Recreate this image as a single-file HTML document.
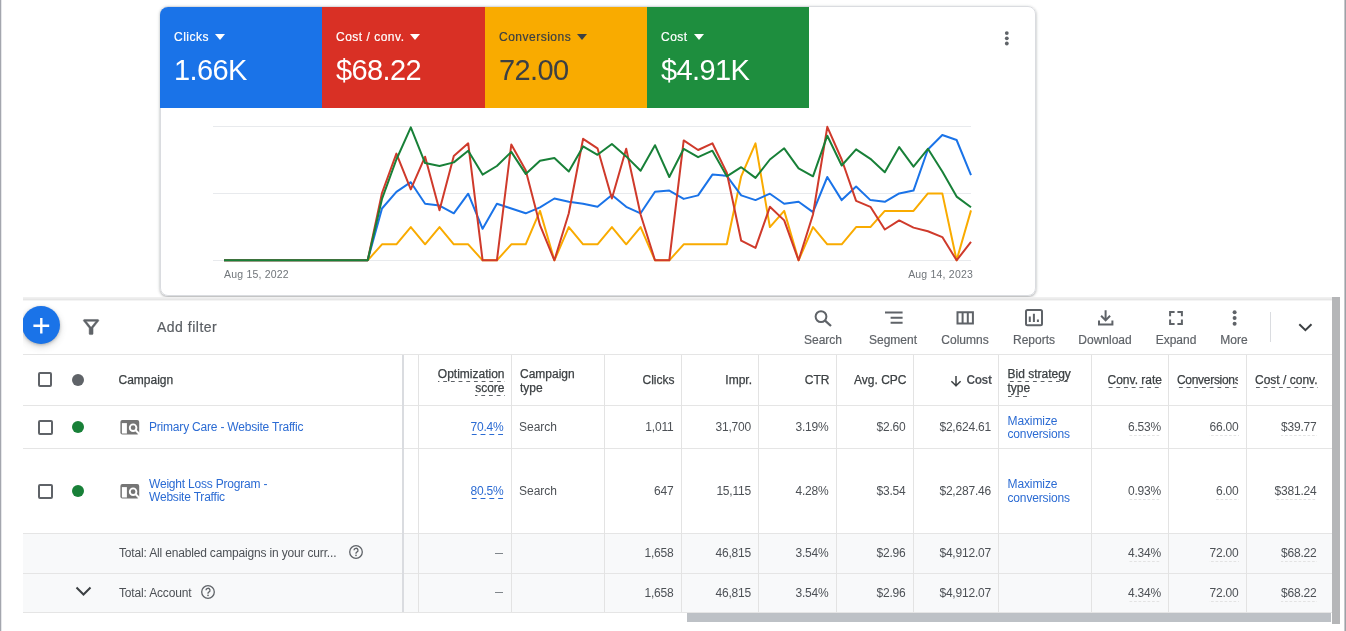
<!DOCTYPE html>
<html><head><meta charset="utf-8">
<style>
*{box-sizing:border-box;margin:0;padding:0}
html,body{width:1346px;height:631px;overflow:hidden;background:#fff;font-family:"Liberation Sans",sans-serif;color:#3c4043}
body{position:relative}
.abs{position:absolute}
.tile{position:absolute;top:7px;height:101px;width:163px;color:#fff}
.tile .lab{position:absolute;left:14px;top:23px;font-size:12px;letter-spacing:.5px;white-space:nowrap;-webkit-text-stroke:.2px currentColor}
.tile .lab i{display:inline-block;width:0;height:0;border-left:5px solid transparent;border-right:5px solid transparent;border-top:6px solid currentColor;margin-left:6px;vertical-align:1.5px}
.tile .val{position:absolute;left:14px;top:47px;font-size:29px;letter-spacing:-.6px;white-space:nowrap}
.tb{position:absolute;top:0;height:56px;text-align:center;font-size:12px;color:#5f6368}
.tb svg{position:absolute;top:9px;left:50%;margin-left:-12px}
.tb span{position:absolute;top:34px;left:0;right:0;white-space:nowrap;-webkit-text-stroke:.2px currentColor}
.vl{position:absolute;width:1px;background:#e3e3e3}
.hl{position:absolute;height:1px;background:#e5e5e5;left:23px;width:1309px}
.t{position:absolute;white-space:nowrap}
.hd{-webkit-text-stroke:.25px currentColor;color:#3c4043 !important}
.num{letter-spacing:-.2px}
.cb{position:absolute;width:14.5px;height:14.5px;border:2px solid #5f6368;border-radius:2px}
.dot{position:absolute;width:12px;height:12px;border-radius:50%}
.dash{padding-bottom:2px;background-image:linear-gradient(to right,#5f6368 55%,transparent 55%);background-size:7.7px 1.3px;background-repeat:repeat-x;background-position:right bottom}
.dashb{padding-bottom:1.5px;background-image:linear-gradient(to right,transparent 49%,#2b6bd3 49%);background-size:8.8px 1.3px;background-repeat:repeat-x;background-position:right bottom}
.dot2{padding-bottom:2px;background-image:linear-gradient(to right,#e3e3e3 55%,transparent 55%);background-size:4.5px 1px;background-repeat:repeat-x;background-position:right bottom}
</style></head><body>
<div id="wrap" style="position:absolute;left:0;top:0;width:1346px;height:631px;will-change:transform">
<div class="abs" style="left:0;top:0;width:1px;height:631px;background:#a4a6ae"></div><div class="abs" style="left:1px;top:0;width:1px;height:631px;background:#e6e7ea"></div>
<div class="abs" style="left:1344px;top:0;width:1px;height:631px;background:#c6c8cc"></div><div class="abs" style="left:1345px;top:0;width:1px;height:631px;background:#9ea1a6"></div>

<!-- chart card -->
<div class="abs" style="left:159.5px;top:6px;width:876.5px;height:290px;border:1px solid #dadce0;border-radius:8px;box-shadow:0 1px 2px rgba(60,64,67,.3),0 1px 3px 1px rgba(60,64,67,.12)"></div>
<div class="tile" style="left:160px;background:#1a73e8;border-top-left-radius:8px"><div class="lab">Clicks<i></i></div><div class="val">1.66K</div></div>
<div class="tile" style="left:322px;background:#d93025"><div class="lab">Cost / conv.<i></i></div><div class="val">$68.22</div></div>
<div class="tile" style="left:485px;background:#f9ab00;color:#3c4043"><div class="lab">Conversions<i></i></div><div class="val">72.00</div></div>
<div class="tile" style="left:647px;width:162px;background:#1e8e3e"><div class="lab">Cost<i></i></div><div class="val">$4.91K</div></div>
<svg class="abs" style="left:1000px;top:28px" width="14" height="20" viewBox="0 0 14 20"><circle cx="6.8" cy="5.1" r="1.9" fill="#5f6368"/><circle cx="6.8" cy="10.3" r="1.9" fill="#5f6368"/><circle cx="6.8" cy="15.5" r="1.9" fill="#5f6368"/></svg>

<svg class="abs" style="left:0;top:0" width="1346" height="300">
<g stroke="#e8eaed" stroke-width="1"><line x1="213" y1="126.5" x2="971" y2="126.5"/><line x1="213" y1="193.5" x2="971" y2="193.5"/><line x1="213" y1="260.5" x2="971" y2="260.5"/></g>
<g fill="none" stroke-width="2" stroke-linejoin="round">
<path stroke="#f9ab00" d="M224.0,260.3 L238.4,260.3 L252.7,260.3 L267.1,260.3 L281.5,260.3 L295.8,260.3 L310.2,260.3 L324.6,260.3 L338.9,260.3 L353.3,260.3 L367.7,260.3 L382.0,244.3 L396.4,244.3 L410.8,227.1 L425.1,244.3 L439.5,227.1 L453.8,244.3 L468.2,244.3 L482.6,260.3 L496.9,260.3 L511.3,244.3 L525.7,244.3 L540.0,210.9 L554.4,260.3 L568.8,227.1 L583.1,244.3 L597.5,244.3 L611.9,227.1 L626.2,244.3 L640.6,227.1 L655.0,260.3 L669.3,260.3 L683.7,244.3 L698.1,244.3 L712.4,244.3 L726.8,244.3 L741.2,176.3 L755.5,143.3 L769.9,227.1 L784.2,210.9 L798.6,260.3 L813.0,227.1 L827.3,244.3 L841.7,244.3 L856.1,227.1 L870.4,227.1 L884.8,210.9 L899.2,210.9 L913.5,210.9 L927.9,193.4 L942.3,193.4 L956.6,260.3 L971.0,210.4"/>
<path stroke="#1a73e8" d="M224.0,260.3 L238.4,260.3 L252.7,260.3 L267.1,260.3 L281.5,260.3 L295.8,260.3 L310.2,260.3 L324.6,260.3 L338.9,260.3 L353.3,260.3 L367.7,260.3 L382.0,208.5 L396.4,191.8 L410.8,182.2 L425.1,203.7 L439.5,205.6 L453.8,213.3 L468.2,193.7 L482.6,228.8 L496.9,203.7 L511.3,208.5 L525.7,213.3 L540.0,207.3 L554.4,198.5 L568.8,201.8 L583.1,203.7 L597.5,206.8 L611.9,194.9 L626.2,206.8 L640.6,213.3 L655.0,191.8 L669.3,190.6 L683.7,198.9 L698.1,195.4 L712.4,174.6 L726.8,175.8 L741.2,195.4 L755.5,200.1 L769.9,193.7 L784.2,203.7 L798.6,201.8 L813.0,212.1 L827.3,177.0 L841.7,200.1 L856.1,186.5 L870.4,200.1 L884.8,201.8 L899.2,193.4 L913.5,190.6 L927.9,149.5 L942.3,135.0 L956.6,140.0 L971.0,175.1"/>
<path stroke="#cf3a2b" d="M224.0,260.3 L238.4,260.3 L252.7,260.3 L267.1,260.3 L281.5,260.3 L295.8,260.3 L310.2,260.3 L324.6,260.3 L338.9,260.3 L353.3,260.3 L367.7,260.3 L382.0,193.0 L396.4,153.6 L410.8,189.4 L425.1,156.7 L439.5,210.2 L453.8,156.0 L468.2,143.3 L482.6,260.3 L496.9,260.3 L511.3,144.5 L525.7,170.3 L540.0,225.2 L554.4,260.3 L568.8,213.3 L583.1,138.8 L597.5,148.3 L611.9,198.5 L626.2,148.8 L640.6,214.5 L655.0,260.3 L669.3,260.3 L683.7,140.4 L698.1,150.0 L712.4,143.3 L726.8,172.7 L741.2,240.7 L755.5,247.9 L769.9,206.8 L784.2,220.4 L798.6,260.3 L813.0,214.5 L827.3,126.8 L841.7,159.5 L856.1,200.9 L870.4,206.8 L884.8,229.5 L899.2,220.4 L913.5,227.6 L927.9,231.2 L942.3,237.1 L956.6,260.3 L971.0,241.9"/>
<path stroke="#188038" d="M224.0,260.3 L238.4,260.3 L252.7,260.3 L267.1,260.3 L281.5,260.3 L295.8,260.3 L310.2,260.3 L324.6,260.3 L338.9,260.3 L353.3,260.3 L367.7,260.3 L382.0,198.9 L396.4,159.5 L410.8,127.3 L425.1,163.1 L439.5,166.0 L453.8,162.4 L468.2,150.7 L482.6,174.6 L496.9,166.0 L511.3,151.9 L525.7,173.9 L540.0,160.7 L554.4,157.9 L568.8,171.5 L583.1,146.4 L597.5,154.8 L611.9,144.0 L626.2,156.4 L640.6,170.8 L655.0,145.2 L669.3,177.0 L683.7,148.8 L698.1,157.2 L712.4,150.7 L726.8,176.3 L741.2,167.2 L755.5,177.9 L769.9,159.5 L784.2,148.3 L798.6,168.4 L813.0,176.3 L827.3,135.7 L841.7,165.5 L856.1,149.3 L870.4,158.8 L884.8,172.2 L899.2,147.1 L913.5,166.7 L927.9,148.8 L942.3,171.5 L956.6,196.6 L971.0,207.3"/>
</g>
<text x="224" y="277.5" font-size="10.5" letter-spacing=".2" fill="#70757a" font-family="Liberation Sans">Aug 15, 2022</text>
<text x="973" y="277.5" font-size="10.5" letter-spacing=".2" fill="#70757a" font-family="Liberation Sans" text-anchor="end">Aug 14, 2023</text>
</svg>

<!-- toolbar -->
<div class="abs" style="left:23px;top:297px;width:1309px;height:1px;background:#f0f0f0"></div><div class="abs" style="left:23px;top:298px;width:1309px;height:1px;background:#ececec"></div><div class="abs" style="left:23px;top:299px;width:1309px;height:1px;background:#e6e6e6"></div><div class="abs" style="left:23px;top:300px;width:1309px;height:1px;background:#f4f4f4"></div>
<div class="abs" style="left:23px;top:299px;width:1309px;height:56px;overflow:hidden">
  <div class="abs" style="left:-1.3px;top:7.2px;width:38.3px;height:38.3px;border-radius:50%;background:#1a73e8;box-shadow:0 1px 3px rgba(60,64,67,.3),0 3px 7px rgba(60,64,67,.2)"></div>
</div>
<svg class="abs" style="left:0;top:299px" width="1346" height="56" viewBox="0 299 1346 56">
  <path d="M41.3 318v15.6M33.4 325.7h15.8" stroke="#fff" stroke-width="2.4"/>
  <path transform="translate(79.4 315.7) scale(0.975 0.945)" fill="#5f6368" stroke="#5f6368" stroke-width=".5" d="M7,6h10l-5.01,6.3L7,6z M4.25,5.61C6.27,8.2,10,13,10,13v6c0,0.55,0.45,1,1,1h2c0.55,0,1-0.45,1-1v-6c0,0,3.72-4.8,5.74-7.39C20.25,4.95,19.78,4,18.95,4H5.04C4.21,4,3.74,4.95,4.25,5.61z"/>
  <g fill="none" stroke="#5f6368" stroke-width="2">
    <circle cx="821" cy="316.6" r="5.4"/>
    <path d="M824.8 320.4l6.2 5.6" stroke-width="2.3"/>
    <path d="M885 312.6h17.6M890.6 317.7h12M890.6 322.8h12"/>
    <path d="M957.5 312.3h15.4v11.1h-15.4zM962.6 312.3v11.1M967.8 312.3v11.1"/>
    <rect x="1026" y="310" width="16" height="15.2" rx="1.5"/>
    <path d="M1105.6 310.2v10.3M1101.1 315.8l4.5 4.6 4.5-4.6M1099 320.5v3.9h13.4v-3.9"/>
    <path d="M1170.1 316.2v-4.3h4.5M1177.4 311.9h4.5v4.3M1181.9 319.6v4.3h-4.5M1174.6 323.9h-4.5v-4.3"/>
  </g>
  <path d="M1029.8 316.6v5.3M1033.9 313.8v8.1M1037.9 319.4v2.5" stroke="#5f6368" stroke-width="2"/>
  <circle cx="1234.6" cy="312.3" r="2" fill="#5f6368"/><circle cx="1234.6" cy="318" r="2" fill="#5f6368"/><circle cx="1234.6" cy="323.7" r="2" fill="#5f6368"/>
  <path d="M1299.3 324.2l6.1 5.9 6.1-5.9" fill="none" stroke="#3c4043" stroke-width="2"/>
</svg>
<div class="abs" style="left:157px;top:319px;font-size:14px;letter-spacing:.5px;color:#5a5e63;-webkit-text-stroke:.2px currentColor">Add filter</div>
<div class="abs" style="left:0;top:299px;width:1346px;height:56px">
  <div class="tb" style="left:793px;width:60px"><span>Search</span></div>
  <div class="tb" style="left:863px;width:60px"><span>Segment</span></div>
  <div class="tb" style="left:935px;width:60px"><span>Columns</span></div>
  <div class="tb" style="left:1004px;width:60px"><span>Reports</span></div>
  <div class="tb" style="left:1075px;width:60px"><span>Download</span></div>
  <div class="tb" style="left:1146px;width:60px"><span>Expand</span></div>
  <div class="tb" style="left:1204px;width:60px"><span>More</span></div>
  <div class="abs" style="left:1270px;top:13px;width:1px;height:30px;background:#dadce0"></div>
</div>

<!-- table -->
<div class="abs" style="left:23px;top:533px;width:1309px;height:79px;background:#f8f9fa"></div><div class="hl" style="top:354px"></div><div class="hl" style="top:405px"></div><div class="hl" style="top:448px"></div><div class="hl" style="top:533px"></div><div class="hl" style="top:573px"></div><div class="hl" style="top:612px"></div><div class="vl" style="left:418px;top:355px;height:257px"></div><div class="vl" style="left:511px;top:355px;height:257px"></div><div class="vl" style="left:604px;top:355px;height:257px"></div><div class="vl" style="left:681px;top:355px;height:257px"></div><div class="vl" style="left:758px;top:355px;height:257px"></div><div class="vl" style="left:836px;top:355px;height:257px"></div><div class="vl" style="left:913px;top:355px;height:257px"></div><div class="vl" style="left:998px;top:355px;height:257px"></div><div class="vl" style="left:1091px;top:355px;height:257px"></div><div class="vl" style="left:1168px;top:355px;height:257px"></div><div class="vl" style="left:1246px;top:355px;height:257px"></div><div class="abs" style="left:402px;top:355px;width:2px;height:257px;background:#dadce0"></div><div class="cb" style="left:37.8px;top:372.2px"></div><div class="dot" style="left:71.5px;top:373.5px;background:#5f6368"></div><div class="t hd" style="left:118.5px;top:372.64px;font-size:12px;line-height:14px;color:#4d5156;">Campaign</div>
<div class="t hd" style="left:104.5px;width:400px;text-align:right;top:366.54px;font-size:12px;line-height:14px;color:#4d5156;"><span class="dash">Optimization</span></div>
<div class="t hd" style="left:104.5px;width:400px;text-align:right;top:380.74px;font-size:12px;line-height:14px;color:#4d5156;"><span class="dash">score</span></div>
<div class="t hd" style="left:520px;top:366.54px;font-size:12px;line-height:14px;color:#4d5156;">Campaign</div>
<div class="t hd" style="left:520px;top:380.84px;font-size:12px;line-height:14px;color:#4d5156;">type</div>
<div class="t hd" style="left:274.5px;width:400px;text-align:right;top:372.74px;font-size:12px;line-height:14px;color:#4d5156;">Clicks</div>
<div class="t hd" style="left:352.0px;width:400px;text-align:right;top:372.74px;font-size:12px;line-height:14px;color:#4d5156;">Impr.</div>
<div class="t hd" style="left:429.5px;width:400px;text-align:right;top:372.74px;font-size:12px;line-height:14px;color:#4d5156;">CTR</div>
<div class="t hd" style="left:506.5px;width:400px;text-align:right;top:372.74px;font-size:12px;line-height:14px;color:#4d5156;">Avg. CPC</div>
<div class="t " style="left:591.5px;width:400px;text-align:right;top:372.84px;font-size:12px;line-height:14px;color:#4d5156;font-weight:bold;letter-spacing:-.4px">Cost</div>
<svg class="abs" style="left:948.7px;top:373.7px" width="14" height="14" viewBox="0 0 14 14"><path d="M7 2v10.5M2.4 7.2L7 11.8 11.6 7.2" fill="none" stroke="#3c4043" stroke-width="1.5"/></svg><div class="t hd" style="left:1007.5px;top:366.54px;font-size:12px;line-height:14px;color:#4d5156;"><span class="dash">Bid strategy</span></div>
<div class="t hd" style="left:1007.5px;top:381.24px;font-size:12px;line-height:14px;color:#4d5156;"><span class="dash">type</span></div>
<div class="t hd" style="left:762.0px;width:400px;text-align:right;top:372.74px;font-size:12px;line-height:14px;color:#4d5156;"><span class="dash">Conv. rate</span></div>
<div class="abs" style="left:1177px;top:370px;width:61px;height:20px;overflow:hidden"><div class="t hd" style="left:0px;top:2.74px;font-size:12px;line-height:14px;color:#4d5156;letter-spacing:-.3px"><span class="dash">Conversions</span></div>
</div><div class="t hd" style="left:917.5px;width:400px;text-align:right;top:372.74px;font-size:12px;line-height:14px;color:#4d5156;"><span class="dash">Cost / conv.</span></div>
<div class="cb" style="left:38px;top:420px"></div><div class="dot" style="left:71.5px;top:421px;background:#188038"></div><svg class="abs" style="left:120px;top:420px" width="21" height="17" viewBox="0 0 21 17"><rect x="0.4" y="0" width="18.8" height="14.6" rx="2" fill="#757575"/><rect x="1.9" y="3.1" width="5" height="10.4" fill="#fff"/><circle cx="13.1" cy="7.7" r="3.3" fill="none" stroke="#fff" stroke-width="1.9"/><path d="M15.4 10l4 4" stroke="#fff" stroke-width="2"/></svg><div class="t " style="left:149px;top:420.24px;font-size:12px;line-height:14px;color:#2b6bd3;letter-spacing:-.2px">Primary Care - Website Traffic</div>
<div class="t " style="left:103.5px;width:400px;text-align:right;top:420.24px;font-size:12px;line-height:14px;color:#2b6bd3;letter-spacing:-.2px"><span class="dashb">70.4%</span></div>
<div class="t " style="left:519px;top:420.24px;font-size:12px;line-height:14px;color:#4d5156;">Search</div>
<div class="t num" style="left:273.5px;width:400px;text-align:right;top:420.24px;font-size:12px;line-height:14px;color:#4d5156;">1,011</div>
<div class="t num" style="left:351.0px;width:400px;text-align:right;top:420.24px;font-size:12px;line-height:14px;color:#4d5156;">31,700</div>
<div class="t num" style="left:428.5px;width:400px;text-align:right;top:420.24px;font-size:12px;line-height:14px;color:#4d5156;">3.19%</div>
<div class="t num" style="left:505.5px;width:400px;text-align:right;top:420.24px;font-size:12px;line-height:14px;color:#4d5156;">$2.60</div>
<div class="t num" style="left:591.0px;width:400px;text-align:right;top:420.24px;font-size:12px;line-height:14px;color:#4d5156;">$2,624.61</div>
<div class="t " style="left:1007.5px;top:413.74px;font-size:12px;line-height:14px;color:#2b6bd3;letter-spacing:-.1px">Maximize</div>
<div class="t " style="left:1007.5px;top:427.24px;font-size:12px;line-height:14px;color:#2b6bd3;letter-spacing:-.15px">conversions</div>
<div class="t num" style="left:761.0px;width:400px;text-align:right;top:420.24px;font-size:12px;line-height:14px;color:#4d5156;"><span class="dot2">6.53%</span></div>
<div class="t num" style="left:838.5px;width:400px;text-align:right;top:420.24px;font-size:12px;line-height:14px;color:#4d5156;"><span class="dot2">66.00</span></div>
<div class="t num" style="left:916.5px;width:400px;text-align:right;top:420.24px;font-size:12px;line-height:14px;color:#4d5156;"><span class="dot2">$39.77</span></div>
<div class="cb" style="left:38px;top:484px"></div><div class="dot" style="left:71.5px;top:485px;background:#188038"></div><svg class="abs" style="left:120px;top:483.5px" width="21" height="17" viewBox="0 0 21 17"><rect x="0.4" y="0" width="18.8" height="14.6" rx="2" fill="#757575"/><rect x="1.9" y="3.1" width="5" height="10.4" fill="#fff"/><circle cx="13.1" cy="7.7" r="3.3" fill="none" stroke="#fff" stroke-width="1.9"/><path d="M15.4 10l4 4" stroke="#fff" stroke-width="2"/></svg><div class="t " style="left:149px;top:476.94px;font-size:12px;line-height:14px;color:#2b6bd3;letter-spacing:-.2px">Weight Loss Program -</div>
<div class="t " style="left:149px;top:490.44px;font-size:12px;line-height:14px;color:#2b6bd3;letter-spacing:-.2px">Website Traffic</div>
<div class="t " style="left:103.5px;width:400px;text-align:right;top:483.94px;font-size:12px;line-height:14px;color:#2b6bd3;letter-spacing:-.2px"><span class="dashb">80.5%</span></div>
<div class="t " style="left:519px;top:483.94px;font-size:12px;line-height:14px;color:#4d5156;">Search</div>
<div class="t num" style="left:273.5px;width:400px;text-align:right;top:483.94px;font-size:12px;line-height:14px;color:#4d5156;">647</div>
<div class="t num" style="left:351.0px;width:400px;text-align:right;top:483.94px;font-size:12px;line-height:14px;color:#4d5156;">15,115</div>
<div class="t num" style="left:428.5px;width:400px;text-align:right;top:483.94px;font-size:12px;line-height:14px;color:#4d5156;">4.28%</div>
<div class="t num" style="left:505.5px;width:400px;text-align:right;top:483.94px;font-size:12px;line-height:14px;color:#4d5156;">$3.54</div>
<div class="t num" style="left:591.0px;width:400px;text-align:right;top:483.94px;font-size:12px;line-height:14px;color:#4d5156;">$2,287.46</div>
<div class="t " style="left:1007.5px;top:477.44px;font-size:12px;line-height:14px;color:#2b6bd3;letter-spacing:-.1px">Maximize</div>
<div class="t " style="left:1007.5px;top:490.64px;font-size:12px;line-height:14px;color:#2b6bd3;letter-spacing:-.15px">conversions</div>
<div class="t num" style="left:761.0px;width:400px;text-align:right;top:483.94px;font-size:12px;line-height:14px;color:#4d5156;"><span class="dot2">0.93%</span></div>
<div class="t num" style="left:838.5px;width:400px;text-align:right;top:483.94px;font-size:12px;line-height:14px;color:#4d5156;"><span class="dot2">6.00</span></div>
<div class="t num" style="left:916.5px;width:400px;text-align:right;top:483.94px;font-size:12px;line-height:14px;color:#4d5156;"><span class="dot2">$381.24</span></div>
<div class="t " style="left:119px;top:546.04px;font-size:12px;line-height:14px;color:#4d5156;letter-spacing:-.17px">Total: All enabled campaigns in your curr...</div>
<svg class="abs" style="left:348px;top:544.2px" width="16" height="16" viewBox="0 0 16 16"><circle cx="8" cy="8" r="6.3" fill="none" stroke="#5f6368" stroke-width="1.3"/><path d="M6 6.3a2 2 0 1 1 2.8 1.8c-.6.3-.8.6-.8 1.3v.4" fill="none" stroke="#5f6368" stroke-width="1.3"/><circle cx="8" cy="11.4" r=".8" fill="#5f6368"/></svg><div class="abs" style="left:495px;top:553px;width:8px;height:1px;background:#80868b"></div><div class="t num" style="left:273.5px;width:400px;text-align:right;top:546.04px;font-size:12px;line-height:14px;color:#4d5156;">1,658</div>
<div class="t num" style="left:351.0px;width:400px;text-align:right;top:546.04px;font-size:12px;line-height:14px;color:#4d5156;">46,815</div>
<div class="t num" style="left:428.5px;width:400px;text-align:right;top:546.04px;font-size:12px;line-height:14px;color:#4d5156;">3.54%</div>
<div class="t num" style="left:505.5px;width:400px;text-align:right;top:546.04px;font-size:12px;line-height:14px;color:#4d5156;">$2.96</div>
<div class="t num" style="left:591.0px;width:400px;text-align:right;top:546.04px;font-size:12px;line-height:14px;color:#4d5156;">$4,912.07</div>
<div class="t num" style="left:761.0px;width:400px;text-align:right;top:546.04px;font-size:12px;line-height:14px;color:#4d5156;"><span class="dot2">4.34%</span></div>
<div class="t num" style="left:838.5px;width:400px;text-align:right;top:546.04px;font-size:12px;line-height:14px;color:#4d5156;"><span class="dot2">72.00</span></div>
<div class="t num" style="left:916.5px;width:400px;text-align:right;top:546.04px;font-size:12px;line-height:14px;color:#4d5156;"><span class="dot2">$68.22</span></div>
<div class="t " style="left:119px;top:585.74px;font-size:12px;line-height:14px;color:#4d5156;letter-spacing:-.17px">Total: Account</div>
<svg class="abs" style="left:200px;top:583.9px" width="16" height="16" viewBox="0 0 16 16"><circle cx="8" cy="8" r="6.3" fill="none" stroke="#5f6368" stroke-width="1.3"/><path d="M6 6.3a2 2 0 1 1 2.8 1.8c-.6.3-.8.6-.8 1.3v.4" fill="none" stroke="#5f6368" stroke-width="1.3"/><circle cx="8" cy="11.4" r=".8" fill="#5f6368"/></svg><div class="abs" style="left:495px;top:592px;width:8px;height:1px;background:#80868b"></div><div class="t num" style="left:273.5px;width:400px;text-align:right;top:585.74px;font-size:12px;line-height:14px;color:#4d5156;">1,658</div>
<div class="t num" style="left:351.0px;width:400px;text-align:right;top:585.74px;font-size:12px;line-height:14px;color:#4d5156;">46,815</div>
<div class="t num" style="left:428.5px;width:400px;text-align:right;top:585.74px;font-size:12px;line-height:14px;color:#4d5156;">3.54%</div>
<div class="t num" style="left:505.5px;width:400px;text-align:right;top:585.74px;font-size:12px;line-height:14px;color:#4d5156;">$2.96</div>
<div class="t num" style="left:591.0px;width:400px;text-align:right;top:585.74px;font-size:12px;line-height:14px;color:#4d5156;">$4,912.07</div>
<div class="t num" style="left:761.0px;width:400px;text-align:right;top:585.74px;font-size:12px;line-height:14px;color:#4d5156;"><span class="dot2">4.34%</span></div>
<div class="t num" style="left:838.5px;width:400px;text-align:right;top:585.74px;font-size:12px;line-height:14px;color:#4d5156;"><span class="dot2">72.00</span></div>
<div class="t num" style="left:916.5px;width:400px;text-align:right;top:585.74px;font-size:12px;line-height:14px;color:#4d5156;"><span class="dot2">$68.22</span></div>
<svg class="abs" style="left:75px;top:585px" width="17" height="12" viewBox="0 0 17 12"><path d="M1.5 2.5l7 7 7-7" fill="none" stroke="#3c4043" stroke-width="2"/></svg>

<div class="abs" style="left:1332px;top:297px;width:8px;height:327px;background:#b5b6b8"></div>
<div class="abs" style="left:687px;top:613px;width:644px;height:9px;background:#bdc1c6"></div>
</div>
</body></html>
